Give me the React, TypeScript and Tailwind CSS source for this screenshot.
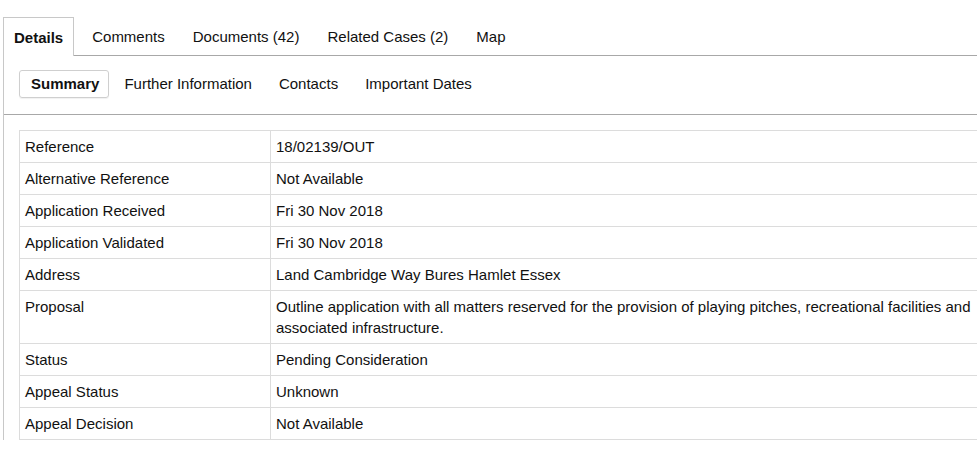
const tabs = ["Details", "Comments", "Documents (42)", "Related Cases (2)", "Map"];
const subTabs = ["Summary", "Further Information", "Contacts", "Important Dates"];

const rows: [string, string][] = [
  ["Reference", "18/02139/OUT"],
  ["Alternative Reference", "Not Available"],
  ["Application Received", "Fri 30 Nov 2018"],
  ["Application Validated", "Fri 30 Nov 2018"],
  ["Address", "Land Cambridge Way Bures Hamlet Essex"],
  [
    "Proposal",
    "Outline application with all matters reserved for the provision of playing pitches, recreational facilities and associated infrastructure.",
  ],
  ["Status", "Pending Consideration"],
  ["Appeal Status", "Unknown"],
  ["Appeal Decision", "Not Available"],
];

export default function App() {
  return (
    <div className="h-[454px] w-full overflow-hidden bg-white pl-[3px] pt-[17px] font-['Liberation_Sans',Arial,sans-serif] text-[15px] text-[#111]">
      {/* main tabs */}
      <ul className="flex border-b border-[#a8a8a8]">
        {tabs.map((t, i) =>
          i === 0 ? (
            <li
              key={t}
              className="-mb-px flex h-[39px] items-center border border-b-0 border-[#c8c8c8] bg-white px-[10px] pt-[2px] font-bold"
            >
              {t}
            </li>
          ) : (
            <li key={t} className={`flex h-[38px] items-center px-[14px] pt-[2px] ${i === 1 ? "ml-[4px]" : ""}`}>
              {t}
            </li>
          )
        )}
      </ul>

      <div className="border-l border-[#c8c8c8]">
        {/* sub tabs */}
        <div className="flex gap-[3px] border-b border-[#a8a8a8] pb-[16px] pl-[15px] pt-[14px]">
          {subTabs.map((t, i) => (
            <div
              key={t}
              className={
                i === 0
                  ? "flex h-[28px] items-center rounded-[3px] border border-[#cfcfcf] pl-[11px] pr-[9px] pt-px font-bold shadow-[0_1px_1px_rgba(0,0,0,0.06)]"
                  : "flex h-[28px] items-center px-[12px] pt-px"
              }
            >
              {t}
            </div>
          ))}
        </div>

        {/* summary table */}
        <table className="ml-[15px] mt-[15px] w-[990px] border-collapse">
          <tbody>
            {rows.map(([k, v]) => (
              <tr key={k}>
                <th className="w-[251px] border border-[#dcdcdc] px-[5px] py-[5px] text-left align-top font-normal leading-[21px]">
                  {k}
                </th>
                <td className="border border-[#dcdcdc] py-[5px] pl-[5px] pr-[20px] align-top leading-[21px]">{v}</td>
              </tr>
            ))}
          </tbody>
        </table>
      </div>
    </div>
  );
}
